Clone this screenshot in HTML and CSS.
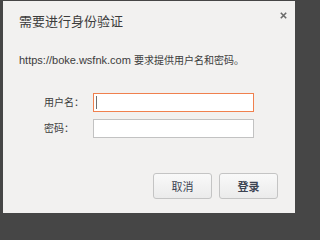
FILE: index.html
```html
<!DOCTYPE html>
<html>
<head>
<meta charset="utf-8">
<link rel="stylesheet" href="styles.css">
</head>
<body>
<div class="dialog">
  <div class="header">
    <div class="title">需要进行身份验证</div>
    <svg class="close" width="7" height="7" viewBox="0 0 7 7"><path d="M0.8 0.8L6.2 6.2M6.2 0.8L0.8 6.2" stroke="#6a6a6a" stroke-width="1.6"/></svg>
  </div>
  <div class="message">https://boke.wsfnk.com <span class="cjk">要求提供用户名和密码。</span></div>
  <div class="form">
    <div class="label">用户名：</div>
    <div class="field focused"><span class="caret"></span></div>
    <div class="label">密码：</div>
    <div class="field"></div>
  </div>
  <div class="actions">
    <div class="btn">取消</div>
    <div class="btn primary">登录</div>
  </div>
</div>
</body>
</html>
```
FILE: styles.css
```css
html {
  background: #464646;
}
body {
  margin: 0;
  padding: 0;
  width: 300px;
  height: 216px;
  overflow: hidden;
  font-family: "Liberation Sans", "Noto Sans CJK SC", sans-serif;
  color: #3c3c3c;
}
.dialog {
  margin: 1px 5px 3px 3px;
  height: 212px;
  box-sizing: border-box;
  background: #f2f1f0;
  padding: 11px 17px 0 16px;
  display: flex;
  flex-direction: column;
}
.header {
  display: flex;
  justify-content: space-between;
  height: 17px;
  margin-top: 1px;
}
.title {
  font-size: 13px;
  line-height: 17px;
  color: #3c3c3c;
}
.close {
  margin: -1px -9px 0 0;
}
.message {
  margin-top: 23px;
  font-size: 11px;
  line-height: 14px;
  white-space: nowrap;
}
.cjk {
  font-size: 10px;
}
.form {
  margin-top: 25px;
  padding-left: 25px;
  display: grid;
  grid-template-columns: 49px 161px;
  row-gap: 7px;
  align-items: center;
}
.label {
  font-size: 10px;
  line-height: 14px;
}
.field {
  height: 19px;
  box-sizing: border-box;
  border: 1px solid #c2c2c2;
  background: #ffffff;
  display: flex;
  align-items: center;
  padding-left: 2px;
}
.field.focused {
  border-color: #f0804e;
}
.caret {
  width: 1px;
  height: 13px;
  background: #707070;
}
.actions {
  margin-top: 35px;
  display: flex;
  justify-content: flex-end;
  gap: 7px;
}
.btn {
  width: 59px;
  height: 26px;
  box-sizing: border-box;
  border: 1px solid #c4c4c4;
  border-radius: 3px;
  background: linear-gradient(#f9f9f9, #ebebeb);
  display: flex;
  align-items: center;
  justify-content: center;
  font-size: 11px;
  color: #3c4352;
}
.btn.primary {
  font-weight: bold;
}
```
